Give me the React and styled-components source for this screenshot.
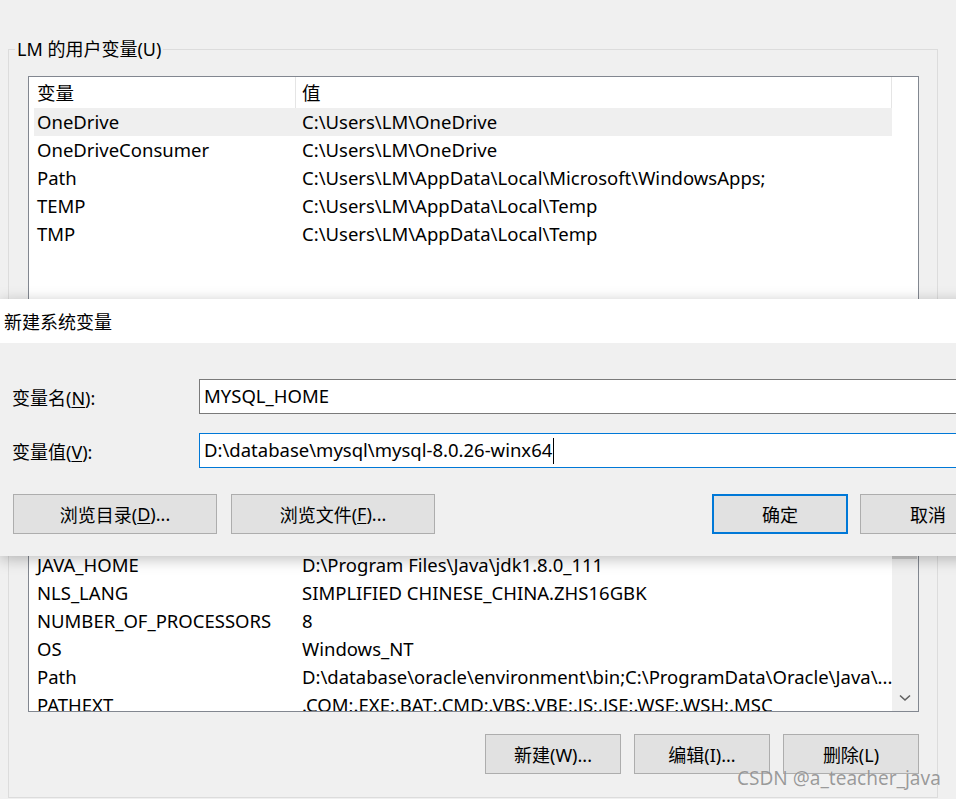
import React from 'react';
import styled, { createGlobalStyle } from 'styled-components';

const FONT = `"Noto Sans", "Noto Sans CJK SC", sans-serif`;

const GlobalStyle = createGlobalStyle`
  html, body { margin: 0; padding: 0; background: #f0f0f0; }
  body { font-family: ${FONT}; }
`;

const Page = styled.div`
  position: relative;
  box-sizing: border-box;
  width: 956px;
  height: 799px;
  overflow: hidden;
  padding: 37px 0 0 8px;
  background: #f0f0f0;
  font-family: ${FONT};
  font-size: 18.5px;
  color: #000;
`;

const Group = styled.fieldset`
  box-sizing: border-box;
  width: 930px;
  min-width: 0;
  margin: ${(p) => p.$mt || 0}px 0 0 0;
  padding: 0;
  border: 1px solid #dcdcdc;
`;

const Legend = styled.legend`
  margin-left: 6px;
  padding: 0 2px;
  line-height: 24px;
  font-size: 18px;
`;

const GroupBody = styled.div`
  padding: ${(p) => p.$pt}px 18px ${(p) => p.$pb}px 19px;
`;

const ListBox = styled.div`
  box-sizing: border-box;
  height: ${(p) => p.$h}px;
  border: 1px solid #828790;
  background: #fff;
  display: flex;
  overflow: hidden;
`;

const ListContent = styled.div`
  flex: 1;
  min-width: 0;
  padding-left: 5px;
  overflow: hidden;
`;

const Grid = styled.div`
  display: grid;
  grid-template-columns: 262px 1fr;
  height: ${(p) => (p.$header ? 31 : 28)}px;
  line-height: ${(p) => (p.$header ? 31 : 28)}px;
  background: ${(p) => (p.$selected ? '#efefef' : '#fff')};
  white-space: nowrap;
`;

const Cell = styled.div`
  overflow: hidden;
  padding-left: ${(p) => (p.$second ? 6 : 3)}px;
  border-right: ${(p) => (p.$divider ? '1px solid #e5e5e5' : 'none')};
`;

const ScrollTrack = styled.div`
  flex: none;
  width: 26px;
  display: flex;
  flex-direction: column;
  background: ${(p) => (p.$visible ? '#f0f0f0' : '#fff')};
`;

const ArrowBox = styled.div`
  flex: none;
  height: 26px;
  display: flex;
  align-items: center;
  justify-content: center;
`;

const Thumb = styled.div`
  flex: none;
  height: 97px;
  margin-right: 1px;
  background: #cdcdcd;
`;

const TrackSpace = styled.div`
  flex: 1;
`;

const ButtonRow = styled.div`
  display: flex;
  justify-content: ${(p) => p.$justify || 'flex-end'};
  gap: ${(p) => p.$gap || 13}px;
  margin-top: ${(p) => p.$mt || 0}px;
`;

const ButtonGroup = styled.div`
  display: flex;
  gap: ${(p) => p.$gap}px;
`;

const Button = styled.div`
  box-sizing: border-box;
  width: ${(p) => p.$w}px;
  height: 40px;
  display: flex;
  align-items: center;
  justify-content: center;
  background: #e1e1e1;
  border: ${(p) => (p.$default ? '2px solid #0078d7' : '1px solid #adadad')};
  font-size: 18px;
  white-space: nowrap;
`;

const U = styled.span`
  text-decoration: underline;
  text-underline-offset: 2px;
`;

const Dialog = styled.div`
  position: absolute;
  left: 0;
  top: 299px;
  width: 1009px;
  background: #f0f0f0;
  box-shadow: 0 3px 14px rgba(0, 0, 0, 0.26);
`;

const TitleBar = styled.div`
  height: 44px;
  display: flex;
  align-items: center;
  padding-left: 4px;
  background: #fff;
  font-size: 18px;
`;

const DialogBody = styled.div`
  padding: 36px 13px 22px 12px;
`;

const FieldRow = styled.div`
  display: grid;
  grid-template-columns: 187px 1fr;
  align-items: center;
  & + & {
    margin-top: 19px;
  }
`;

const Label = styled.div`
  font-size: 18px;
`;

const TextBox = styled.div`
  box-sizing: border-box;
  height: 35px;
  display: flex;
  align-items: center;
  padding: 0 0 2px 4px;
  background: #fff;
  border: 1px solid ${(p) => (p.$focused ? '#0078d7' : '#7a7a7a')};
  font-size: 18.5px;
  white-space: nowrap;
`;

const Caret = styled.span`
  display: inline-block;
  width: 1px;
  height: 26px;
  background: #000;
  margin: 2px 0 0 1px;
`;

const DialogButtons = styled(ButtonRow)`
  margin-left: 1px;
`;

const Watermark = styled.div`
  position: absolute;
  left: 737px;
  top: 765px;
  font-size: 19px;
  line-height: 26px;
  color: rgba(128, 128, 128, 0.78);
  text-shadow: 0 0 1px rgba(255, 255, 255, 0.6);
  white-space: nowrap;
`;

const userVars = [
  ['OneDrive', 'C:\\Users\\LM\\OneDrive'],
  ['OneDriveConsumer', 'C:\\Users\\LM\\OneDrive'],
  ['Path', 'C:\\Users\\LM\\AppData\\Local\\Microsoft\\WindowsApps;'],
  ['TEMP', 'C:\\Users\\LM\\AppData\\Local\\Temp'],
  ['TMP', 'C:\\Users\\LM\\AppData\\Local\\Temp'],
];

const sysVars = [
  ['ComSpec', 'C:\\WINDOWS\\system32\\cmd.exe'],
  ['DriverData', 'C:\\Windows\\System32\\Drivers\\DriverData'],
  ['FPS_BROWSER_APP_PROFILE_STRING', 'Internet Explorer'],
  ['JAVA_HOME', 'D:\\Program Files\\Java\\jdk1.8.0_111'],
  ['NLS_LANG', 'SIMPLIFIED CHINESE_CHINA.ZHS16GBK'],
  ['NUMBER_OF_PROCESSORS', '8'],
  ['OS', 'Windows_NT'],
  ['Path', 'D:\\database\\oracle\\environment\\bin;C:\\ProgramData\\Oracle\\Java\\...'],
  ['PATHEXT', '.COM;.EXE;.BAT;.CMD;.VBS;.VBE;.JS;.JSE;.WSF;.WSH;.MSC'],
  ['PROCESSOR_ARCHITECTURE', 'AMD64'],
];

function ChevronDown() {
  return (
    <svg width="12" height="8" viewBox="0 0 12 8">
      <path d="M1 1.5 L6 6 L11 1.5" fill="none" stroke="#606060" strokeWidth="1.6" />
    </svg>
  );
}

function VarList({ rows, height, selected, scroll }) {
  return (
    <ListBox $h={height}>
      <ListContent>
        <Grid $header>
          <Cell $divider>变量</Cell>
          <Cell $second $divider>值</Cell>
        </Grid>
        {rows.map(([k, v], i) => (
          <Grid key={k + i} $selected={i === selected}>
            <Cell>{k}</Cell>
            <Cell $second>{v}</Cell>
          </Grid>
        ))}
      </ListContent>
      <ScrollTrack $visible={scroll}>
        {scroll && (
          <>
            <ArrowBox />
            <Thumb />
            <TrackSpace />
            <ArrowBox>
              <ChevronDown />
            </ArrowBox>
          </>
        )}
      </ScrollTrack>
    </ListBox>
  );
}

export default function App() {
  return (
    <>
      <GlobalStyle />
      <Page>
        <Group>
          <Legend>LM 的用户变量(U)</Legend>
          <GroupBody $pt={15} $pb={13}>
            <VarList rows={userVars} height={241} selected={0} />
            <ButtonRow $mt={10}>
              <Button $w={136}>新建(N)...</Button>
              <Button $w={136}>编辑(E)...</Button>
              <Button $w={136}>删除(D)</Button>
            </ButtonRow>
          </GroupBody>
        </Group>
        <Group $mt={17}>
          <Legend>系统变量(S)</Legend>
          <GroupBody $pt={13} $pb={23}>
            <VarList rows={sysVars} height={277} scroll />
            <ButtonRow $mt={22}>
              <Button $w={136}>新建(W)...</Button>
              <Button $w={136}>编辑(I)...</Button>
              <Button $w={136}>删除(L)</Button>
            </ButtonRow>
          </GroupBody>
        </Group>

        <Dialog>
          <TitleBar>新建系统变量</TitleBar>
          <DialogBody>
            <FieldRow>
              <Label>
                变量名(<U>N</U>):
              </Label>
              <TextBox>MYSQL_HOME</TextBox>
            </FieldRow>
            <FieldRow>
              <Label>
                变量值(<U>V</U>):
              </Label>
              <TextBox $focused>
                D:\database\mysql\mysql-8.0.26-winx64
                <Caret />
              </TextBox>
            </FieldRow>
            <DialogButtons $justify="space-between" $mt={26}>
              <ButtonGroup $gap={14}>
                <Button $w={204}>
                  浏览目录(<U>D</U>)...
                </Button>
                <Button $w={204}>
                  浏览文件(<U>F</U>)...
                </Button>
              </ButtonGroup>
              <ButtonGroup $gap={12}>
                <Button $w={136} $default>
                  确定
                </Button>
                <Button $w={136}>取消</Button>
              </ButtonGroup>
            </DialogButtons>
          </DialogBody>
        </Dialog>

        <Watermark>CSDN @a_teacher_java</Watermark>
      </Page>
    </>
  );
}
